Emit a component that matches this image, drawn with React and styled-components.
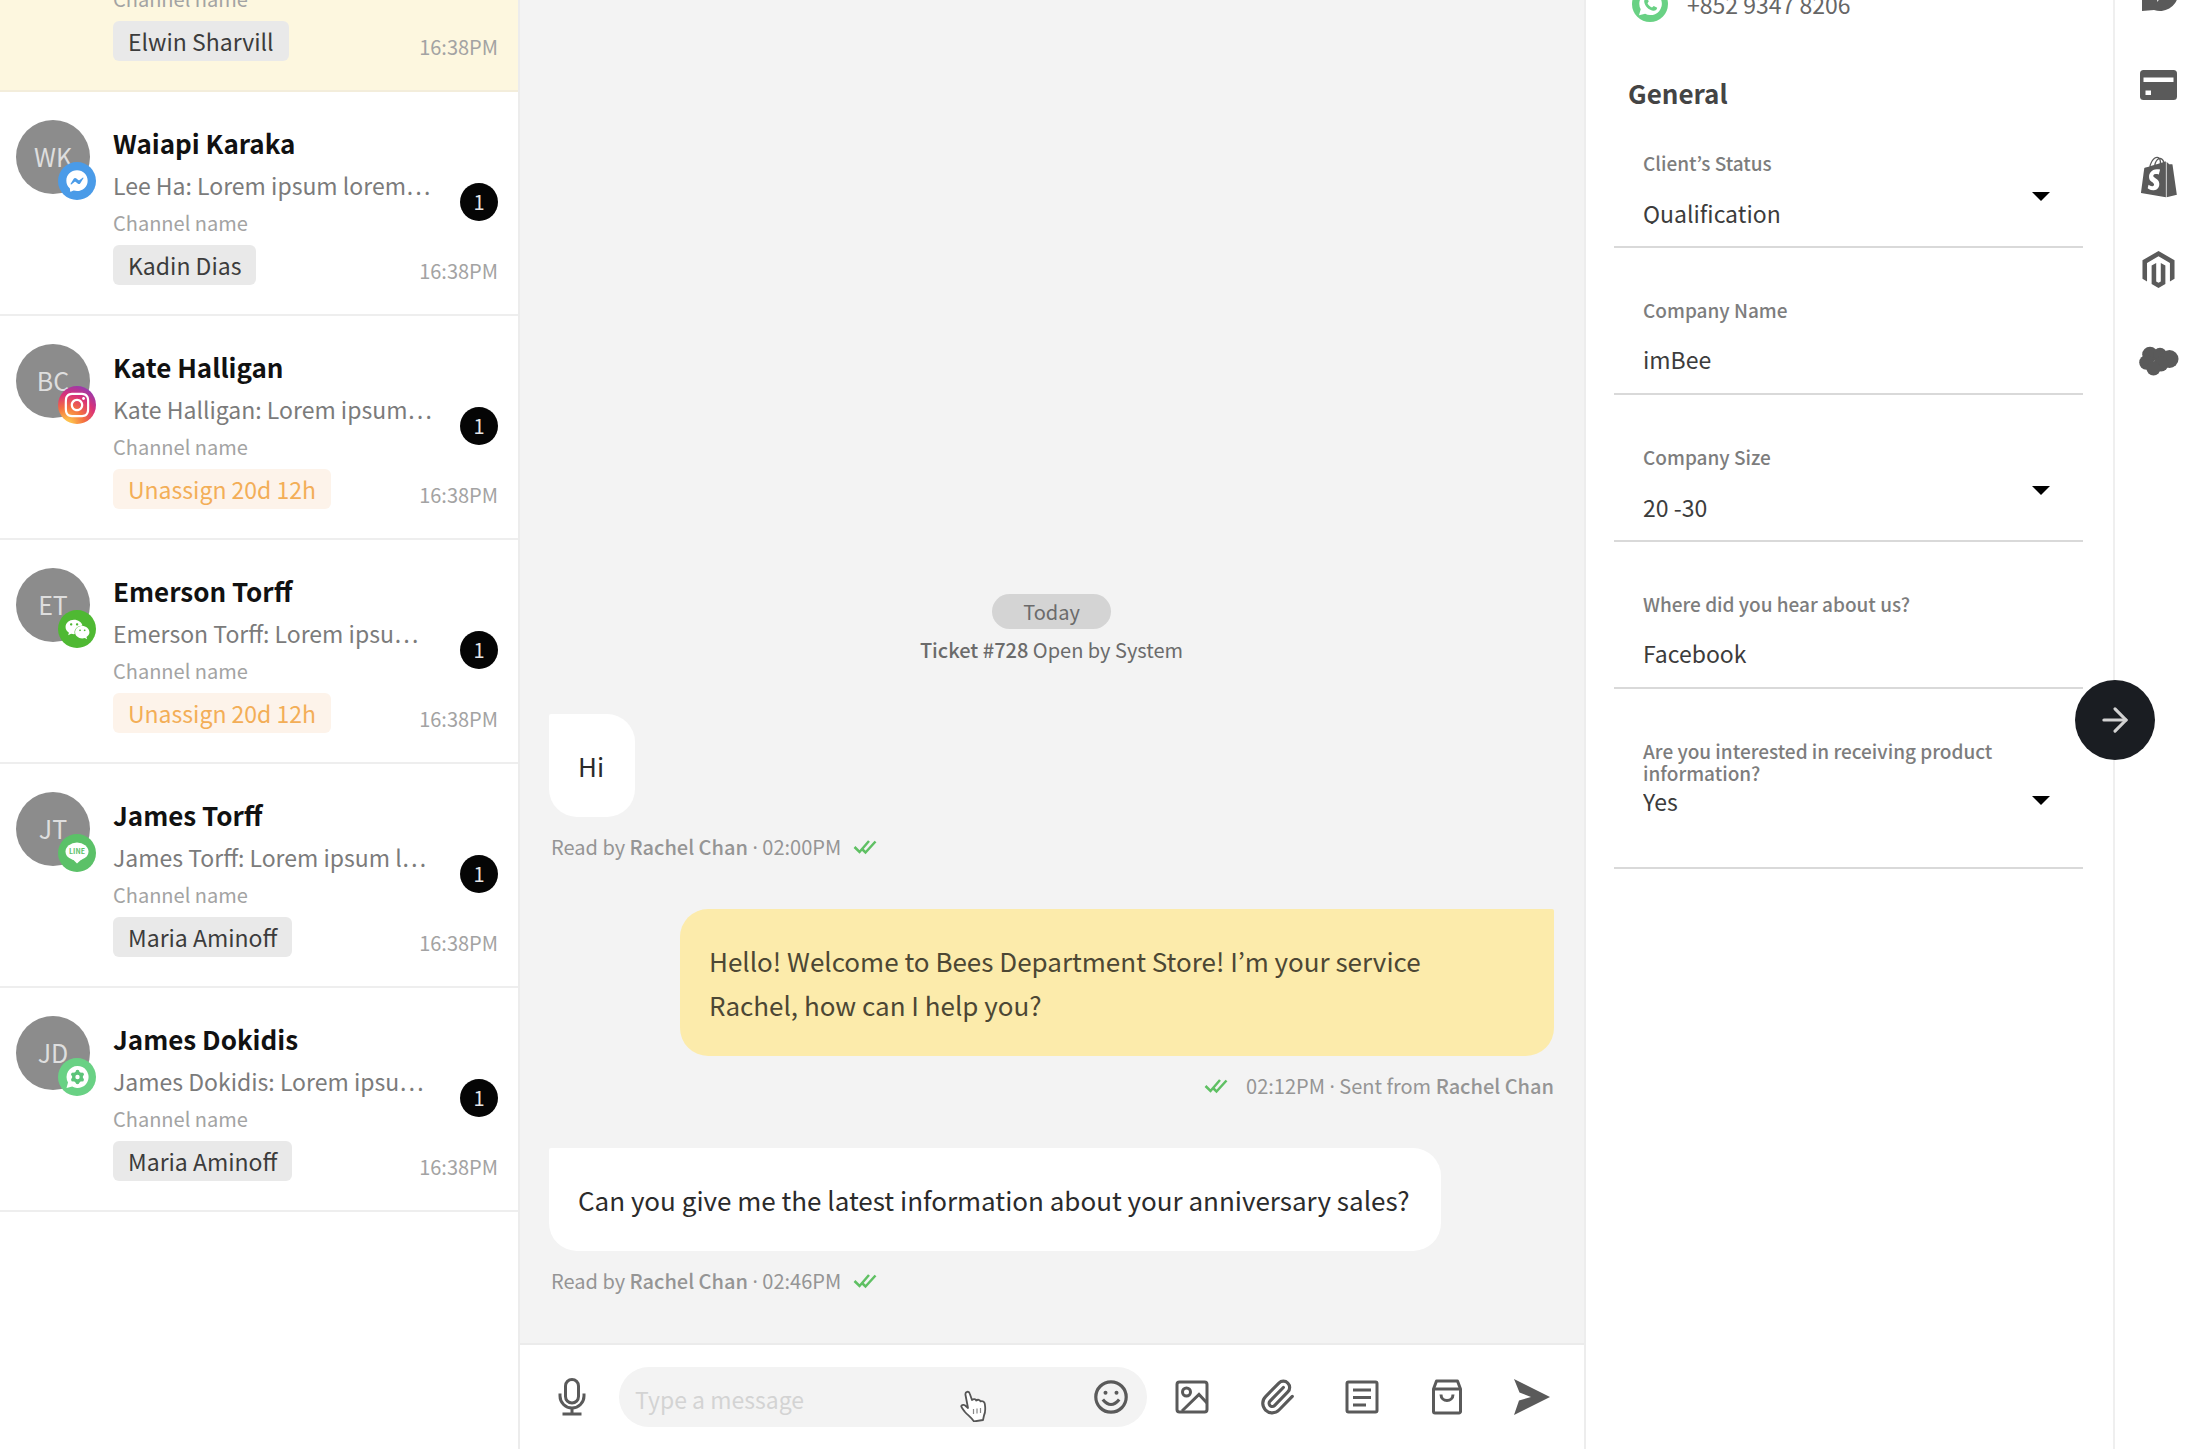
import React, { useState } from 'react';
import styled, { createGlobalStyle } from 'styled-components';
import { FaFacebookMessenger, FaInstagram, FaWeixin, FaShopify, FaMagento } from 'react-icons/fa';
import { ArrowRight, Paperclip } from 'lucide-react';

const GlobalStyle = createGlobalStyle`
  * {
    box-sizing: border-box;
  }

  body {
    margin: 0;
    background-color: #fff;
    color: #222;
    font-family: 'Noto Sans CJK KR', 'Noto Sans', sans-serif;
  }

  button,
  input,
  select {
    margin: 0;
    padding: 0;
    border: none;
    background: none;
    color: inherit;
    font-family: inherit;
  }

  b {
    font-weight: 500;
  }

  svg {
    display: block;
  }
`;

const StyledPage = styled.div`
  display: flex;
  height: 100vh;
  overflow: hidden;
`;

/* chat list */

const StyledSidebar = styled.aside`
  flex: none;
  width: 520px;
  border-right: 2px solid #ececec;
  overflow: hidden;
`;

const StyledChatList = styled.ul`
  margin: 0;
  padding: 0;
  list-style: none;
`;

const StyledChat = styled.li`
  display: flex;
  gap: 23px;
  padding: 28px 20px 29px 16px;
  border-bottom: 2px solid #eee;
`;

const StyledActiveChat = styled(StyledChat)`
  height: 92px;
  align-items: flex-end;
  padding-left: 113px;
  background-color: #fdf7df;
  border-color: #f3eddb;
`;

const StyledAvatar = styled.div`
  position: relative;
  flex: none;
  width: 74px;
  height: 74px;
  border-radius: 50%;
  background-color: #8c8c8c;
  color: #dedede;
  font-size: 25px;
  line-height: 72px;
  text-align: center;
`;

const StyledChannelBadge = styled.span`
  position: absolute;
  left: 42px;
  top: 42px;
  display: flex;
  align-items: center;
  justify-content: center;
  width: 38px;
  height: 38px;
  border-radius: 50%;
  background: ${(props) => props.$background};
  color: #fff;
`;

const StyledChatBody = styled.div`
  flex: 1;
  min-width: 0;
  padding-top: 5px;
`;

const StyledChatName = styled.h2`
  margin: 0 0 5px;
  color: #111;
  font-size: 26px;
  font-weight: 600;
  line-height: 36px;
`;

const StyledChatMiddle = styled.div`
  display: flex;
  align-items: flex-start;
  justify-content: space-between;
`;

const StyledPreview = styled.p`
  margin: 0;
  color: #7b7b7b;
  font-size: 23px;
  line-height: 38px;
  white-space: nowrap;
`;

const StyledChannelName = styled.p`
  margin: 0;
  color: #a3a3a3;
  font-size: 20px;
  line-height: 38px;
`;

const StyledCount = styled.span`
  flex: none;
  width: 38px;
  height: 38px;
  margin-top: 17px;
  border-radius: 50%;
  background-color: #050505;
  color: #e6e6e6;
  font-size: 20px;
  line-height: 38px;
  text-align: center;
`;

const StyledChatFooter = styled.div`
  display: flex;
  align-items: flex-end;
  justify-content: space-between;
  margin-top: 3px;
`;

const StyledTag = styled.span`
  padding: 0 15px;
  border-radius: 6px;
  background-color: ${(props) => (props.$unassigned ? '#fdf3ea' : '#e9e9e9')};
  color: ${(props) => (props.$unassigned ? '#f3ae57' : '#3c3c3c')};
  font-size: 23px;
  line-height: 40px;
`;

const StyledTime = styled.time`
  color: #a3a3a3;
  font-size: 20px;
  line-height: 28px;
`;

/* conversation */

const StyledConversation = styled.main`
  display: flex;
  flex: 1;
  flex-direction: column;
  min-width: 0;
`;

const StyledMessages = styled.div`
  display: flex;
  flex: 1;
  flex-direction: column;
  align-items: flex-start;
  justify-content: flex-end;
  padding: 0 30px 47px 29px;
  background-color: #f3f3f3;
`;

const StyledDay = styled.span`
  align-self: center;
  padding: 0 31px;
  border-radius: 18px;
  background-color: #d4d4d4;
  color: #6b6b6b;
  font-size: 20px;
  line-height: 35px;
`;

const StyledTicket = styled.p`
  align-self: center;
  margin: 6px 0 49px;
  color: #6b6b6b;
  font-size: 20px;
  line-height: 30px;
`;

const StyledMessage = styled.div`
  display: flex;
  flex-direction: column;
  gap: 15px;
  max-width: ${(props) => (props.$own ? '874px' : '100%')};
  align-self: ${(props) => (props.$own ? 'flex-end' : 'flex-start')};
  align-items: ${(props) => (props.$own ? 'flex-end' : 'flex-start')};

  & + & {
    margin-top: 47px;
  }
`;

const StyledBubble = styled.p`
  margin: 0;
  padding: 30px ${(props) => (props.$own ? '48px' : '31px')} 29px 29px;
  border-radius: ${(props) => (props.$own ? '28px 2px 28px 28px' : '2px 28px 28px 28px')};
  background-color: ${(props) => (props.$own ? '#fcebab' : '#fff')};
  color: ${(props) => (props.$own ? '#4c4734' : '#2b2b2b')};
  font-size: 26px;
  line-height: 44px;
`;

const StyledMeta = styled.p`
  display: flex;
  align-items: center;
  gap: ${(props) => (props.$own ? '18px' : '12px')};
  margin: 0;
  padding-left: 2px;
  color: #959595;
  font-size: 20px;
  line-height: 30px;
`;

const StyledDot = styled.span`
  font-family: 'Noto Sans', sans-serif;
  line-height: 1;
`;

const StyledComposer = styled.form`
  display: flex;
  flex: none;
  align-items: center;
  height: 106px;
  padding: 0 32px;
  border-top: 2px solid #ebebeb;
`;

const StyledIconButton = styled.button`
  display: flex;
  flex: none;
  align-items: center;
  justify-content: center;
  width: 40px;
  height: 40px;
  color: #5a5a5a;
`;

const StyledMessageBox = styled.div`
  position: relative;
  display: flex;
  flex: 1;
  align-items: center;
  min-width: 0;
  height: 60px;
  margin: 0 25px 0 27px;
  padding: 0 16px;
  border-radius: 30px;
  background-color: #f3f3f3;
`;

const StyledMessageInput = styled.input`
  flex: 1;
  min-width: 0;
  height: 60px;
  padding-top: 3px;
  outline: none;
  font-size: 23px;

  &::placeholder {
    color: #d3d3d3;
    opacity: 1;
  }
`;

const StyledCursor = styled.svg`
  position: absolute;
  right: 160px;
  top: 23px;
`;

const StyledTools = styled.div`
  display: flex;
  gap: 45px;
`;

/* client details */

const StyledDetails = styled.aside`
  flex: none;
  width: 529px;
  padding: 0 30px 0 28px;
  border-left: 2px solid #ededed;
  overflow: hidden;
`;

const StyledPhone = styled.p`
  display: flex;
  align-items: center;
  gap: 19px;
  height: 40px;
  margin: -16px 0 0 18px;
  color: #666;
  font-size: 23px;
  line-height: 40px;
`;

const StyledSectionTitle = styled.h2`
  margin: 49px 0 0 14px;
  color: #444;
  font-size: 26px;
  font-weight: 600;
  line-height: 40px;
`;

const StyledField = styled.div`
  position: relative;
  padding: 7px 29px ${(props) => (props.$tall ? '51px' : '18px')};
  margin-top: 44px;
  border-bottom: 2px solid #d9d9d9;

  &:first-of-type {
    margin-top: 32px;
  }
`;

const StyledLabel = styled.label`
  display: block;
  min-height: 44px;
  color: #7d7d7d;
  font-size: 19px;
  font-weight: 500;
  line-height: 22px;
`;

const StyledValueInput = styled.input`
  display: block;
  width: 100%;
  height: 32px;
  outline: none;
  color: #3c3c3c;
  font-size: 23px;
`;

const StyledValueSelect = styled.select`
  display: block;
  width: 100%;
  height: 28px;
  margin-bottom: 4px;
  appearance: none;
  outline: none;
  color: #3c3c3c;
  font-size: 23px;
`;

const StyledCaret = styled.span`
  position: absolute;
  right: 33px;
  top: calc(50% - 4px);
  border: 9px solid transparent;
  border-top-color: #000;
  border-bottom: none;
  pointer-events: none;
`;

/* integrations */

const StyledRail = styled.nav`
  position: relative;
  display: flex;
  flex: none;
  flex-direction: column;
  align-items: center;
  gap: 52px;
  width: 79px;
  padding-left: 10px;
  border-left: 2px solid #efefef;
  color: #5a5a5a;
`;

const StyledRailButton = styled(StyledIconButton)`
  &:first-of-type {
    margin-top: -27px;
  }
`;

const StyledNextButton = styled.button`
  position: absolute;
  left: -40px;
  top: calc(50% - 45px);
  display: flex;
  align-items: center;
  justify-content: center;
  width: 80px;
  height: 80px;
  border-radius: 50%;
  background-color: #1a1d22;
  color: #d2d2d2;
`;

const channels = {
  messenger: {
    background: '#4a9be8',
    icon: <FaFacebookMessenger size={22} />,
  },
  instagram: {
    background: 'radial-gradient(circle at 25% 100%, #fdc04c 8%, #f4713f 35%, #d93178 62%, #7a3fc4 95%)',
    icon: <FaInstagram size={28} />,
  },
  wechat: {
    background: '#4fb933',
    icon: <FaWeixin size={25} />,
  },
  line: {
    background: '#5bc168',
    icon: <LineIcon />,
  },
  business: {
    background: '#69d184',
    icon: <BusinessIcon />,
  },
};

const chats = [
  { id: 1, initials: 'WK', name: 'Waiapi Karaka', preview: 'Lee Ha: Lorem ipsum lorem…', channel: 'messenger', agent: 'Kadin Dias' },
  { id: 2, initials: 'BC', name: 'Kate Halligan', preview: 'Kate Halligan: Lorem ipsum…', channel: 'instagram', waiting: '20d 12h' },
  { id: 3, initials: 'ET', name: 'Emerson Torff', preview: 'Emerson Torff: Lorem ipsu…', channel: 'wechat', waiting: '20d 12h' },
  { id: 4, initials: 'JT', name: 'James Torff', preview: 'James Torff: Lorem ipsum l…', channel: 'line', agent: 'Maria Aminoff' },
  { id: 5, initials: 'JD', name: 'James Dokidis', preview: 'James Dokidis: Lorem ipsu…', channel: 'business', agent: 'Maria Aminoff' },
];

const fields = [
  { id: 'status', label: 'Client’s Status', value: 'Qualification', select: true },
  { id: 'company', label: 'Company Name', value: 'imBee' },
  { id: 'size', label: 'Company Size', value: '20 -30', select: true },
  { id: 'source', label: 'Where did you hear about us?', value: 'Facebook' },
  { id: 'interested', label: 'Are you interested in receiving product information?', value: 'Yes', select: true, tall: true },
];

function LineIcon() {
  return (
    <svg width="24" height="22" viewBox="0 0 24 22">
      <ellipse cx="12" cy="9.5" rx="11.5" ry="9" fill="#fff" />
      <path d="M7 16.5h10.500L12 21.500z" fill="#fff" />
      <text x="12" y="12" fill="#5bc168" fontSize="7" fontWeight="700" textAnchor="middle">
        LINE
      </text>
    </svg>
  );
}

function BusinessIcon() {
  return (
    <svg width="24" height="24" viewBox="0 0 24 24">
      <path d="M12.500 1a11 11 0 1 1-5.300 20.600L1.500 23l1.500-5.500A11 11 0 0 1 12.500 1z" fill="#fff" />
      <g fill="#5cc479">
        <circle cx="12.500" cy="12" r="5.500" />
        <circle cx="12.500" cy="6.700" r="1.900" />
        <circle cx="12.500" cy="17.300" r="1.900" />
        <circle cx="8" cy="9.300" r="1.900" />
        <circle cx="17" cy="9.300" r="1.900" />
        <circle cx="8" cy="14.700" r="1.900" />
        <circle cx="17" cy="14.700" r="1.900" />
      </g>
      <circle cx="12.500" cy="12" r="2.200" fill="#fff" />
    </svg>
  );
}

function WhatsappIcon() {
  return (
    <svg width="36" height="38" viewBox="0 0 36 38">
      <circle cx="18" cy="19" r="18" fill="#69d184" />
      <path d="M18.500 7.500a11.300 11.300 0 1 1-5.400 21.200L7 30.300l1.700-6A11.300 11.300 0 0 1 18.500 7.500z" fill="#fff" />
      <path
        d="M14.800 12.800l2 3.500-1.300 2c1 2 2.400 3.300 4.500 4.300l1.700-1.600 3.500 1.700c-.3 2.300-2 3.300-4.200 3-4.500-.8-8.300-4.700-8.800-9-.1-1.800.900-3.500 2.600-3.900z"
        fill="#69d184"
      />
    </svg>
  );
}

function CheckIcon() {
  return (
    <svg width="24" height="16" viewBox="0 0 24 16" fill="none" stroke="#5fc063" strokeWidth="2.500">
      <path d="M1.500 8l5 5L16 2" />
      <path d="M9.500 10.500L12.500 13.500L22.500 2.500" />
    </svg>
  );
}

function MicIcon() {
  return (
    <svg width="28" height="38" viewBox="0 0 28 38" fill="none" stroke="currentColor" strokeWidth="3">
      <rect x="7.500" y="1.500" width="13" height="23.500" rx="6.500" />
      <path d="M2 15.500v2.500a12 12 0 0 0 24 0v-2.500" />
      <path d="M14 30v6M4.500 36h19" />
    </svg>
  );
}

function SmileIcon() {
  return (
    <svg width="34" height="34" viewBox="0 0 34 34" fill="none" stroke="currentColor" strokeWidth="3.200">
      <circle cx="17" cy="17" r="15.200" />
      <path d="M8.800 19.500Q17 29.500 25.200 19.500" />
      <circle cx="11.500" cy="12.800" r="2" fill="currentColor" stroke="none" />
      <circle cx="22.500" cy="12.800" r="2" fill="currentColor" stroke="none" />
    </svg>
  );
}

function ImageIcon() {
  return (
    <svg width="34" height="34" viewBox="0 0 34 34" fill="none" stroke="currentColor" strokeWidth="3">
      <rect x="2" y="2" width="30" height="30" rx="2.500" />
      <circle cx="11.500" cy="12" r="4" />
      <path d="M7 31L24 14.500l8 8.500" />
    </svg>
  );
}

function NoteIcon() {
  return (
    <svg width="34" height="34" viewBox="0 0 34 34" fill="none" stroke="currentColor" strokeWidth="3">
      <rect x="2" y="2" width="30" height="30" rx="1.500" />
      <path d="M8 10h18M8 17.500h18M8 25h13" />
    </svg>
  );
}

function BagIcon() {
  return (
    <svg width="32" height="36" viewBox="0 0 32 36" fill="none" stroke="currentColor" strokeWidth="3" strokeLinejoin="round">
      <path d="M2.500 10L5.500 2h21l3 8v22.500a1.500 1.500 0 0 1-1.500 1.500H4a1.500 1.500 0 0 1-1.500-1.500z" />
      <path d="M2.500 10h27" />
      <path d="M10 15.500c0 8 12 8 12 0" />
    </svg>
  );
}

function SendIcon() {
  return (
    <svg width="36" height="36" viewBox="0 0 36 36" fill="currentColor">
      <path d="M0 0L36 18L0 36L5 21.500L17 18L5.500 13.500z" />
    </svg>
  );
}

function ChatRailIcon() {
  return (
    <svg width="38" height="38" viewBox="0 0 38 38">
      <path d="M20 1a18 18 0 1 1-6 34.900L2 37V19A18 18 0 0 1 20 1z" fill="currentColor" />
      <path d="M12 21l8-8v6l8-3-11 12 1-6z" fill="#fff" />
    </svg>
  );
}

function CardIcon() {
  return (
    <svg width="37" height="30" viewBox="0 0 37 30">
      <rect width="37" height="30" rx="3.500" fill="currentColor" />
      <path d="M3.500 7.500h30v4.500h-30zM5.500 20.500h5.500v4.500h-5.500z" fill="#fff" />
    </svg>
  );
}

function CloudIcon() {
  return (
    <svg width="40" height="30" viewBox="0 0 40 30" fill="currentColor">
      <circle cx="11" cy="8.500" r="7.800" />
      <circle cx="7.500" cy="16.500" r="7.300" />
      <circle cx="21" cy="8.500" r="6.800" />
      <circle cx="30.500" cy="13" r="9" />
      <circle cx="22" cy="18" r="7.500" />
      <circle cx="14.500" cy="22.500" r="7" />
    </svg>
  );
}

function ChatRow({ chat }) {
  const channel = channels[chat.channel];
  return (
    <StyledChat>
      <StyledAvatar>
        {chat.initials}
        <StyledChannelBadge $background={channel.background}>{channel.icon}</StyledChannelBadge>
      </StyledAvatar>
      <StyledChatBody>
        <StyledChatName>{chat.name}</StyledChatName>
        <StyledChatMiddle>
          <div>
            <StyledPreview>{chat.preview}</StyledPreview>
            <StyledChannelName>Channel name</StyledChannelName>
          </div>
          <StyledCount>1</StyledCount>
        </StyledChatMiddle>
        <ChatFooter agent={chat.agent} waiting={chat.waiting} />
      </StyledChatBody>
    </StyledChat>
  );
}

function ChatFooter({ agent, waiting }) {
  return (
    <StyledChatFooter>
      <StyledTag $unassigned={!agent}>{agent || `Unassign ${waiting}`}</StyledTag>
      <StyledTime>16:38PM</StyledTime>
    </StyledChatFooter>
  );
}

function Field({ field }) {
  const [value, setValue] = useState(field.value);
  const onChange = (e) => setValue(e.target.value);

  return (
    <StyledField $tall={field.tall}>
      <StyledLabel htmlFor={field.id}>{field.label}</StyledLabel>
      {field.select ? (
        <>
          <StyledValueSelect id={field.id} value={value} onChange={onChange}>
            <option>{field.value}</option>
          </StyledValueSelect>
          <StyledCaret />
        </>
      ) : (
        <StyledValueInput id={field.id} value={value} onChange={onChange} />
      )}
    </StyledField>
  );
}

function App() {
  const [message, setMessage] = useState('');

  return (
    <StyledPage>
      <GlobalStyle />
      <StyledSidebar>
        <StyledChatList>
          <StyledActiveChat>
            <StyledChatBody>
              <StyledChannelName>Channel name</StyledChannelName>
              <ChatFooter agent="Elwin Sharvill" />
            </StyledChatBody>
          </StyledActiveChat>
          {chats.map((chat) => (
            <ChatRow key={chat.id} chat={chat} />
          ))}
        </StyledChatList>
      </StyledSidebar>

      <StyledConversation>
        <StyledMessages>
          <StyledDay>Today</StyledDay>
          <StyledTicket>
            <b>Ticket #728</b> Open by System
          </StyledTicket>
          <StyledMessage>
            <StyledBubble>Hi</StyledBubble>
            <StyledMeta>
              <span>
                Read by <b>Rachel Chan</b> <StyledDot>·</StyledDot> 02:00PM
              </span>
              <CheckIcon />
            </StyledMeta>
          </StyledMessage>
          <StyledMessage $own>
            <StyledBubble $own>
              Hello! Welcome to Bees Department Store! I’m your service Rachel, how can I help you?
            </StyledBubble>
            <StyledMeta $own>
              <CheckIcon />
              <span>
                02:12PM <StyledDot>·</StyledDot> Sent from <b>Rachel Chan</b>
              </span>
            </StyledMeta>
          </StyledMessage>
          <StyledMessage>
            <StyledBubble>Can you give me the latest information about your anniversary sales?</StyledBubble>
            <StyledMeta>
              <span>
                Read by <b>Rachel Chan</b> <StyledDot>·</StyledDot> 02:46PM
              </span>
              <CheckIcon />
            </StyledMeta>
          </StyledMessage>
        </StyledMessages>

        <StyledComposer onSubmit={(e) => e.preventDefault()}>
          <StyledIconButton type="button" aria-label="Record">
            <MicIcon />
          </StyledIconButton>
          <StyledMessageBox>
            <StyledMessageInput
              aria-label="Message"
              placeholder="Type a message"
              value={message}
              onChange={(e) => setMessage(e.target.value)}
            />
            <StyledCursor width="28" height="32" viewBox="0 0 28 32">
              <path
                d="M9 18L6.500 5c-.6-3.500 3.400-4.500 4.300-1.300L13 10c1.500-1.500 3.500-1.200 4.300.5 1.500-1.300 3.500-.8 4.200.9 2-.9 4 .2 4.300 2.400.6 4 1 8-.8 11.700l-1 4.500-9 1.500c-2.500-4-6.500-6.500-9-9.500-1.500-2-3.500-4-3.800-6 .9-2 3.500-1.200 4.800.3z"
                fill="#fff"
                stroke="#555"
                strokeWidth="1.800"
                strokeLinejoin="round"
              />
              <path d="M14.500 19v5M18 18.500v5M21.500 18v5" stroke="#888" strokeWidth="1.200" />
            </StyledCursor>
            <StyledIconButton type="button" aria-label="Emoji">
              <SmileIcon />
            </StyledIconButton>
          </StyledMessageBox>
          <StyledTools>
            <StyledIconButton type="button" aria-label="Image">
              <ImageIcon />
            </StyledIconButton>
            <StyledIconButton type="button" aria-label="Attach">
              <Paperclip size={38} strokeWidth={2} />
            </StyledIconButton>
            <StyledIconButton type="button" aria-label="Note">
              <NoteIcon />
            </StyledIconButton>
            <StyledIconButton type="button" aria-label="Products">
              <BagIcon />
            </StyledIconButton>
            <StyledIconButton type="submit" aria-label="Send">
              <SendIcon />
            </StyledIconButton>
          </StyledTools>
        </StyledComposer>
      </StyledConversation>

      <StyledDetails>
        <StyledPhone>
          <WhatsappIcon />
          +852 9347 8206
        </StyledPhone>
        <StyledSectionTitle>General</StyledSectionTitle>
        {fields.map((field) => (
          <Field key={field.id} field={field} />
        ))}
      </StyledDetails>

      <StyledRail>
        <StyledRailButton type="button" aria-label="Chat">
          <ChatRailIcon />
        </StyledRailButton>
        <StyledRailButton type="button" aria-label="Payments">
          <CardIcon />
        </StyledRailButton>
        <StyledRailButton type="button" aria-label="Shopify">
          <FaShopify size={42} />
        </StyledRailButton>
        <StyledRailButton type="button" aria-label="Magento">
          <FaMagento size={37} />
        </StyledRailButton>
        <StyledRailButton type="button" aria-label="Salesforce">
          <CloudIcon />
        </StyledRailButton>
        <StyledNextButton type="button" aria-label="Next">
          <ArrowRight size={38} strokeWidth={2} />
        </StyledNextButton>
      </StyledRail>
    </StyledPage>
  );
}

export default App;
